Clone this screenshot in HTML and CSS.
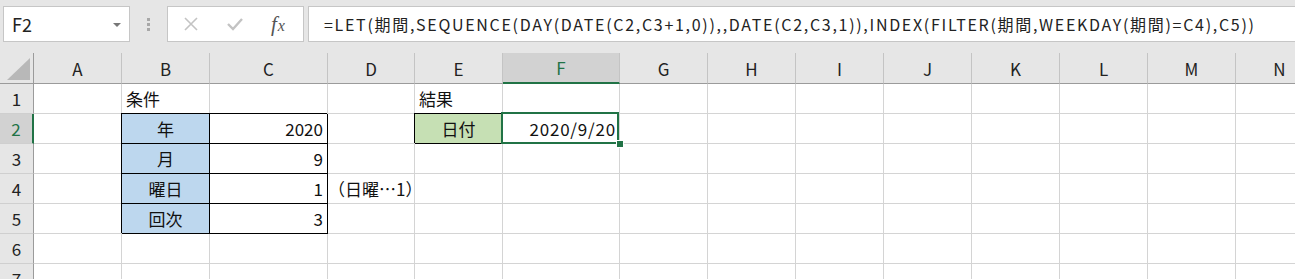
FILE: index.html
```html
<!DOCTYPE html>
<html>

<head>
    <title>曜日の回次</title>
    <link rel="stylesheet" href="styles.css">
</head>

<body>
    <!-- 数式バー -->
    <div class="toolbar">
        <div class="nameBox">F2<span class="dropArrow"></span></div>
        <div class="grip"><span></span><span></span><span></span></div>
        <div class="fxButtons">
            <svg class="fxIcon" width="16" height="16" viewBox="0 0 16 16">
                <path d="M2 2 L14 14 M14 2 L2 14" stroke="#c3c3c3" stroke-width="1.6" fill="none" />
            </svg>
            <svg class="fxIcon" width="18" height="16" viewBox="0 0 18 16">
                <path d="M2 8 L7 13 L16 3" stroke="#c3c3c3" stroke-width="2.4" fill="none" />
            </svg>
            <span class="fxLabel"><i>f</i><i class="x">x</i></span>
        </div>
        <div class="formula">=LET(期間,SEQUENCE(DAY(DATE(C2,C3+1,0)),,DATE(C2,C3,1)),INDEX(FILTER(期間,WEEKDAY(期間)=C4),C5))</div>
    </div>

    <!-- シート -->
    <div class="sheet">
        <div class="corner">
            <svg width="23" height="22" viewBox="0 0 23 22"><polygon points="23,0 23,22 0,22" fill="#b8b8b8" /></svg>
        </div>
        <div class="colHead">A</div>
        <div class="colHead">B</div>
        <div class="colHead">C</div>
        <div class="colHead">D</div>
        <div class="colHead">E</div>
        <div class="colHead active">F</div>
        <div class="colHead">G</div>
        <div class="colHead">H</div>
        <div class="colHead">I</div>
        <div class="colHead">J</div>
        <div class="colHead">K</div>
        <div class="colHead">L</div>
        <div class="colHead">M</div>
        <div class="colHead">N</div>

        <!-- 行1 -->
        <div class="rowHead">1</div>
        <div class="cell"></div>
        <div class="cell">条件</div>
        <div class="cell"></div>
        <div class="cell"></div>
        <div class="cell">結果</div>
        <div class="cell"></div>
        <div class="cell"></div><div class="cell"></div><div class="cell"></div><div class="cell"></div>
        <div class="cell"></div><div class="cell"></div><div class="cell"></div><div class="cell"></div>

        <!-- 行2 -->
        <div class="rowHead active">2</div>
        <div class="cell"></div>
        <div class="cell box blue center">年</div>
        <div class="cell box num">2020</div>
        <div class="cell"></div>
        <div class="cell box green center">日付</div>
        <div class="cell num date selected">2020/9/20</div>
        <div class="cell"></div><div class="cell"></div><div class="cell"></div><div class="cell"></div>
        <div class="cell"></div><div class="cell"></div><div class="cell"></div><div class="cell"></div>

        <!-- 行3 -->
        <div class="rowHead">3</div>
        <div class="cell"></div>
        <div class="cell box blue center">月</div>
        <div class="cell box num">9</div>
        <div class="cell"></div>
        <div class="cell"></div>
        <div class="cell"></div>
        <div class="cell"></div><div class="cell"></div><div class="cell"></div><div class="cell"></div>
        <div class="cell"></div><div class="cell"></div><div class="cell"></div><div class="cell"></div>

        <!-- 行4 -->
        <div class="rowHead">4</div>
        <div class="cell"></div>
        <div class="cell box blue center">曜日</div>
        <div class="cell box num">1</div>
        <div class="cell note">（日曜…1）</div>
        <div class="cell"></div>
        <div class="cell"></div>
        <div class="cell"></div><div class="cell"></div><div class="cell"></div><div class="cell"></div>
        <div class="cell"></div><div class="cell"></div><div class="cell"></div><div class="cell"></div>

        <!-- 行5 -->
        <div class="rowHead">5</div>
        <div class="cell"></div>
        <div class="cell box blue center">回次</div>
        <div class="cell box num">3</div>
        <div class="cell"></div>
        <div class="cell"></div>
        <div class="cell"></div>
        <div class="cell"></div><div class="cell"></div><div class="cell"></div><div class="cell"></div>
        <div class="cell"></div><div class="cell"></div><div class="cell"></div><div class="cell"></div>

        <!-- 行6 -->
        <div class="rowHead">6</div>
        <div class="cell"></div><div class="cell"></div><div class="cell"></div><div class="cell"></div>
        <div class="cell"></div><div class="cell"></div><div class="cell"></div><div class="cell"></div>
        <div class="cell"></div><div class="cell"></div><div class="cell"></div><div class="cell"></div>
        <div class="cell"></div><div class="cell"></div>

        <!-- 行7 -->
        <div class="rowHead">7</div>
        <div class="cell"></div><div class="cell"></div><div class="cell"></div><div class="cell"></div>
        <div class="cell"></div><div class="cell"></div><div class="cell"></div><div class="cell"></div>
        <div class="cell"></div><div class="cell"></div><div class="cell"></div><div class="cell"></div>
        <div class="cell"></div><div class="cell"></div>
    </div>
</body>

</html>
```

FILE: styles.css
```css
/* 全体 */
body {
    margin: 0;
    width: 1295px;
    height: 279px;
    overflow: hidden;
    background-color: #e6e6e6;
    font-family: "Noto Sans CJK JP", "Noto Sans", sans-serif;
    color: #111;
}

/* 数式バー */
.toolbar {
    height: 53px;
    display: flex;
    align-items: flex-start;
    padding-top: 6px;
    padding-left: 3px;
    box-sizing: border-box;
}

.nameBox {
    width: 127px;
    height: 36px;
    box-sizing: border-box;
    background-color: white;
    border: 1px solid #c6c6c6;
    display: flex;
    align-items: center;
    padding-left: 8px;
    font-size: 18px;
    color: #222;
    position: relative;
}

.dropArrow {
    position: absolute;
    right: 8px;
    top: 16px;
    border-left: 4px solid transparent;
    border-right: 4px solid transparent;
    border-top: 4px solid #777;
}

.grip {
    width: 37px;
    height: 36px;
    display: flex;
    flex-direction: column;
    align-items: center;
    justify-content: center;
    gap: 2px;
}

.grip span {
    width: 3px;
    height: 3px;
    background-color: #a8a8a8;
}

.fxButtons {
    width: 137px;
    height: 36px;
    box-sizing: border-box;
    background-color: white;
    border: 1px solid #c6c6c6;
    display: flex;
    align-items: center;
    padding-left: 15px;
    gap: 27px;
}

.fxLabel {
    font-family: "Liberation Serif", serif;
    font-size: 21px;
    color: #555;
}

.fxLabel .x {
    font-size: 16px;
    margin-left: 1px;
}

.formula {
    flex: 1;
    height: 36px;
    margin-left: 4px;
    margin-right: -2px;
    box-sizing: border-box;
    background-color: white;
    border: 1px solid #c6c6c6;
    display: flex;
    align-items: center;
    padding-left: 15px;
    font-size: 16px;
    letter-spacing: 1.7px;
    color: #222;
    white-space: nowrap;
}

/* シート */
.sheet {
    display: grid;
    grid-template-columns: 34px 88px 88px 118px 87px 88px 117px repeat(8, 88px);
    grid-template-rows: 31px repeat(7, 30px);
    background-color: white;
}

.corner,
.colHead {
    background-color: #e6e6e6;
    border-right: 1px solid #c4c4c4;
    border-bottom: 1px solid #9b9b9b;
    box-sizing: border-box;
    display: flex;
    align-items: center;
    justify-content: center;
    font-size: 17px;
    color: #222;
}

.corner {
    align-items: flex-end;
    justify-content: flex-end;
    padding: 0 3px 3px 0;
    border-right-color: #9b9b9b;
}

.colHead.active {
    background-color: #d2d2d2;
    border-bottom: 2px solid #217346;
    color: #217346;
}

.rowHead {
    background-color: #e6e6e6;
    border-right: 1px solid #9b9b9b;
    border-bottom: 1px solid #cfcfcf;
    box-sizing: border-box;
    display: flex;
    align-items: center;
    justify-content: center;
    font-size: 17px;
    color: #222;
}

.rowHead.active {
    background-color: #d2d2d2;
    border-right: 2px solid #217346;
    color: #217346;
}

.cell {
    border-right: 1px solid #d4d4d4;
    border-bottom: 1px solid #d4d4d4;
    box-sizing: border-box;
    display: flex;
    align-items: center;
    padding: 0 4px;
    font-size: 17px;
    white-space: nowrap;
}

.center {
    justify-content: center;
}

.num {
    justify-content: flex-end;
}

.date {
    letter-spacing: 0.8px;
    padding-right: 3px;
}

.box {
    border-right-color: #000;
    border-bottom-color: #000;
    box-shadow: -1px -1px 0 0 #000;
}

.blue {
    background-color: #bdd7ee;
}

.green {
    background-color: #c6e0b4;
}

.note {
    padding-left: 0;
    overflow: visible;
}

/* 選択セル */
.selected {
    position: relative;
}

.selected::after {
    content: "";
    position: absolute;
    left: -2px;
    top: -2px;
    right: 0;
    bottom: -1px;
    border: 2px solid #217346;
}

.selected::before {
    content: "";
    position: absolute;
    left: 113px;
    top: 26px;
    width: 6px;
    height: 6px;
    background-color: #217346;
    border: 1px solid white;
    z-index: 1;
}
```
